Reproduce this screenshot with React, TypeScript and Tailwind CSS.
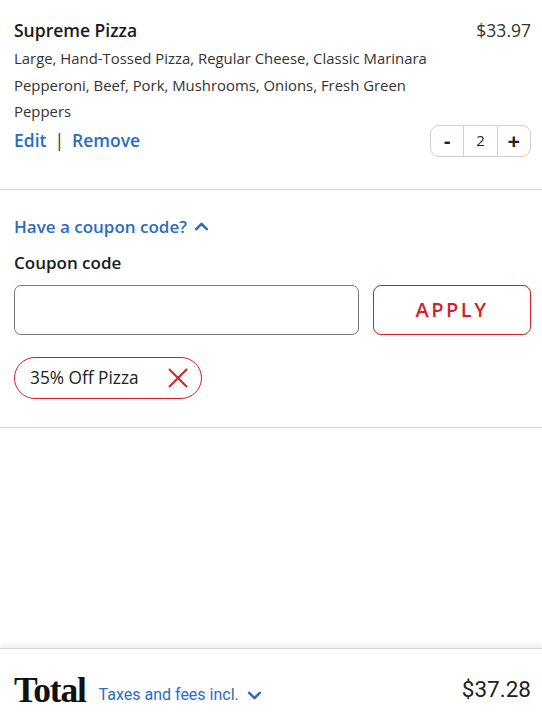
import { useState } from "react";

const blue = "text-[#2a6cc2]";

function ChevronUp({ className }: { className?: string }) {
  return (
    <svg viewBox="0 0 16 16" className={className} fill="none" stroke="currentColor" strokeWidth={2.4} strokeLinecap="round" strokeLinejoin="round">
      <path d="M3 10.5 8 5.5 13 10.5" />
    </svg>
  );
}

function ChevronDown({ className }: { className?: string }) {
  return (
    <svg viewBox="0 0 16 16" className={className} fill="none" stroke="currentColor" strokeWidth={2.4} strokeLinecap="round" strokeLinejoin="round">
      <path d="M3 5.5 8 10.5 13 5.5" />
    </svg>
  );
}

export default function App() {
  const [qty, setQty] = useState(2);
  const [code, setCode] = useState("");

  return (
    <div className="h-[723px] w-[542px] flex flex-col bg-white text-[#1a1a1a] font-['Open_Sans',sans-serif]">
      {/* cart item */}
      <div className="pl-[14px] pr-[11px] pt-[17px] pb-[32px] border-b border-[#d4d4d4]">
        <div className="flex justify-between items-start">
          <h2 className="text-[17.5px] font-semibold leading-[26px]">Supreme Pizza</h2>
          <span className="text-[17.5px] leading-[26px] text-[#333]">$33.97</span>
        </div>
        <p className="text-[14.9px] leading-[26.5px] text-[#333] mt-[2px] w-[432px]">
          Large, Hand-Tossed Pizza, Regular Cheese, Classic Marinara
          <br />
          Pepperoni, Beef, Pork, Mushrooms, Onions, Fresh Green Peppers
        </p>
        <div className="flex justify-between items-center mt-0">
          <div className="flex items-center text-[17.5px] font-semibold">
            <button className={blue}>Edit</button>
            <span className="mx-[8px] font-normal text-[#333]">|</span>
            <button className={blue}>Remove</button>
          </div>
          <div className="flex h-[32px] w-[101px] border border-[#d0d0d0] rounded-[9px] text-[#222]">
            <button onClick={() => setQty(Math.max(1, qty - 1))} className="flex-1 flex items-center justify-center text-[20px] font-bold">-</button>
            <span className="flex-1 flex items-center justify-center border-x border-[#d0d0d0] text-[15px]">{qty}</span>
            <button onClick={() => setQty(qty + 1)} className="flex-1 flex items-center justify-center text-[22px] font-bold">+</button>
          </div>
        </div>
      </div>

      {/* coupon */}
      <div className="pl-[14px] pr-[11px] pt-[24px] pb-[28px] border-b border-[#d4d4d4]">
        <button className={`flex items-center gap-[6px] text-[17px] font-semibold ${blue}`}>
          Have a coupon code?
          <ChevronUp className="w-[17px] h-[17px]" />
        </button>
        <label className="block mt-[11px] text-[17px] font-semibold text-[#1a1a1a]">Coupon code</label>
        <div className="flex gap-[14px] mt-[9px]">
          <input
            value={code}
            onChange={(e) => setCode(e.target.value)}
            className="h-[50px] w-[345px] rounded-[7px] border border-[#7a7a7a] px-3 outline-none"
          />
          <button className="h-[50px] flex-1 rounded-[8px] border border-[#d41f2b] text-[#d41f2b] text-[20px] font-semibold tracking-[2.5px]">
            APPLY
          </button>
        </div>
        <div className="mt-[22px] inline-flex items-center h-[42px] pl-[15px] pr-[11px] rounded-full border border-[#d41f2b]">
          <span className="text-[17.3px] text-[#222]">35% Off Pizza</span>
          <button className="ml-[27px] text-[#d41f2b]">
            <svg viewBox="0 0 24 24" className="w-[24px] h-[24px]" fill="none" stroke="currentColor" strokeWidth={2}>
              <path d="M3 3 21 21M21 3 3 21" />
            </svg>
          </button>
        </div>
      </div>

      <div className="flex-1" />

      {/* footer */}
      <div className="h-[75px] shrink-0 pl-[14px] pr-[11px] flex items-center justify-between bg-white border-t border-[#d6d6d6] shadow-[0_-4px_4px_rgba(0,0,0,0.06)]">
        <div className="flex items-end gap-[13px] pt-[8px]">
          <span className="font-['Liberation_Serif',serif] font-bold text-[35.5px] leading-[32px] tracking-[-1.2px] text-[#111]">Total</span>
          <button className={`flex items-center gap-[7px] text-[16px] font-['Roboto',sans-serif] leading-[20px] mb-[1px] ${blue}`}>
            Taxes and fees incl.
            <ChevronDown className="w-[17px] h-[17px]" />
          </button>
        </div>
        <span className="font-['Roboto',sans-serif] text-[22.5px] text-[#222] pt-[8px]">$37.28</span>
      </div>
    </div>
  );
}
